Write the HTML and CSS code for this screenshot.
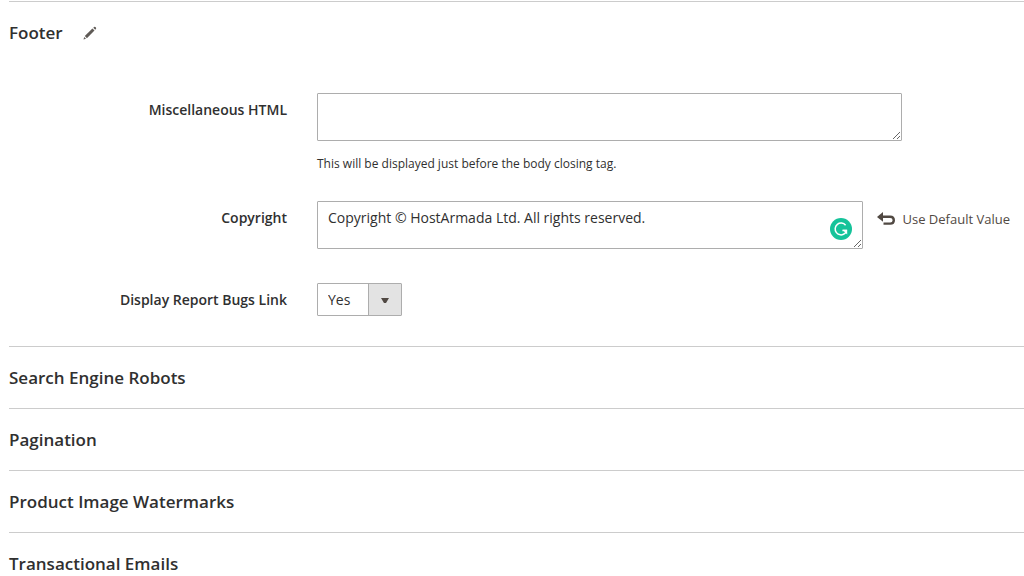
FILE: index.html
```
<!DOCTYPE html>
<html lang="en">
<head>
  <meta charset="UTF-8">
  <meta name="viewport" content="width=device-width, initial-scale=1.0">
  <title>Design Configuration</title>
  <link rel="stylesheet" href="styles.css">
</head>
<body>

  <main class="config">
    <!-- Footer -->
    <section class="section section-open">
      <h2 class="section-title">
        Footer
        <button type="button" class="edit-button" aria-label="Edit Footer">
          <svg width="14" height="14" viewBox="0 0 14 14" fill="#5f5a56">
            <path d="M0.5 13.5L1.2 11L3 12.8Z"/>
            <path d="M1.8 10.1L9.4 2.5L11.5 4.6L3.9 12.2Z"/>
            <path d="M10.3 1.8L11 1.1Q11.7 0.5 12.4 1.1L12.9 1.6Q13.5 2.3 12.9 3L12.2 3.7Z"/>
          </svg>
        </button>
      </h2>

      <form class="fields">
        <div class="field">
          <label class="label" for="misc-html">Miscellaneous HTML</label>
          <div class="control">
            <textarea id="misc-html" class="textarea" rows="1"></textarea>
            <p class="note">This will be displayed just before the body closing tag.</p>
          </div>
        </div>

        <div class="field field-with-default">
          <label class="label" for="copyright">Copyright</label>
          <div class="control">
            <textarea id="copyright" class="textarea" rows="1" spellcheck="false">Copyright © HostArmada Ltd. All rights reserved.</textarea>
            <svg class="checker-badge" width="22" height="22" viewBox="0 0 22 22">
              <circle cx="11" cy="11" r="11" fill="#15c39a"/>
              <path d="M15.6 7.2A5.9 5.9 0 1 0 14.6 15.7Q16.2 14.6 16.3 12.6H12.4" fill="none" stroke="#fff" stroke-width="1.5"/>
              <path d="M12.6 11.8H17.2V16.4Z" fill="#fff"/>
            </svg>
          </div>
          <button type="button" class="default-button">
            <svg width="18" height="14" viewBox="0 0 18 14">
              <path d="M0 4.9L6 0V9.8Z" fill="#514943"/>
              <path d="M5 4.7H13.2Q16.8 4.7 16.8 8.2Q16.8 11.6 13.2 11.6H6.5" fill="none" stroke="#514943" stroke-width="2.4"/>
            </svg>
            Use Default Value
          </button>
        </div>

        <div class="field">
          <label class="label" for="report-bugs">Display Report Bugs Link</label>
          <div class="control">
            <select id="report-bugs" class="select">
              <option selected>Yes</option>
              <option>No</option>
            </select>
          </div>
        </div>
      </form>
    </section>

    <!-- Collapsed sections -->
    <section class="section">
      <h2 class="section-title">Search Engine Robots</h2>
    </section>
    <section class="section">
      <h2 class="section-title">Pagination</h2>
    </section>
    <section class="section">
      <h2 class="section-title">Product Image Watermarks</h2>
    </section>
    <section class="section">
      <h2 class="section-title">Transactional Emails</h2>
    </section>
  </main>

</body>
</html>
```
FILE: styles.css
```
* {
  box-sizing: border-box;
}

html {
  scrollbar-width: none;
}

body {
  margin: 0;
  background: #fff;
  color: #303030;
  font-family: "Open Sans", "Noto Sans", sans-serif;
  font-size: 14px;
  line-height: 20px;
}

.config {
  padding: 1px 0 0 9px;
}

.section {
  border-top: 1px solid #ccc;
}

.section-open {
  padding-bottom: 30px;
}

.section-title {
  display: flex;
  align-items: center;
  gap: 20px;
  height: 61px;
  margin: 0;
  font-size: 17px;
  font-weight: 600;
  line-height: 24px;
}

.edit-button,
.default-button {
  padding: 0;
  border: none;
  background: none;
  font-family: inherit;
  cursor: pointer;
}

.edit-button {
  display: flex;
}

/* Fields */
.fields {
  display: flex;
  flex-direction: column;
  gap: 28px;
  padding-top: 30px;
}

.field {
  display: flex;
  align-items: flex-start;
  padding-right: 122px;
}

.field-with-default {
  padding-right: 14px;
}

.label {
  flex: none;
  width: 278px;
  margin-right: 30px;
  padding-top: 7px;
  font-weight: 600;
  text-align: right;
}

.control {
  position: relative;
  flex: 1;
}

.textarea {
  display: block;
  width: 100%;
  height: 48px;
  padding: 6px 10px;
  border: 1px solid #adadad;
  border-radius: 1px;
  background: #fff;
  color: #303030;
  font-family: inherit;
  font-size: 14px;
  line-height: 20px;
  resize: vertical;
  overflow: hidden;
}

.note {
  margin: 14px 0 0;
  font-size: 12px;
  line-height: 18px;
}

.checker-badge {
  position: absolute;
  right: 11px;
  bottom: 9px;
}

.default-button {
  display: flex;
  align-items: center;
  gap: 8px;
  margin: 8px 0 0 14px;
  color: #514943;
  font-size: 13px;
  font-weight: 500;
  line-height: 20px;
}

.field-with-default + .field {
  margin-top: 6px;
}

.select {
  display: block;
  width: 85px;
  height: 33px;
  padding: 0 10px;
  border: 1px solid #adadad;
  border-radius: 1px;
  color: #303030;
  font-family: inherit;
  font-size: 14px;
  appearance: none;
  background-color: #fff;
  background-image:
    url("data:image/svg+xml,%3Csvg xmlns='http://www.w3.org/2000/svg' width='33' height='31'%3E%3Cpath fill='%23e3e3e3' d='M0 0h33v31H0z'/%3E%3Cpath fill='%23adadad' d='M0 0h1v31H0z'/%3E%3Cpath fill='%23514943' d='M13 14h8l-3 5h-2z'/%3E%3C/svg%3E");
  background-repeat: no-repeat;
  background-position: right center;
}
```
